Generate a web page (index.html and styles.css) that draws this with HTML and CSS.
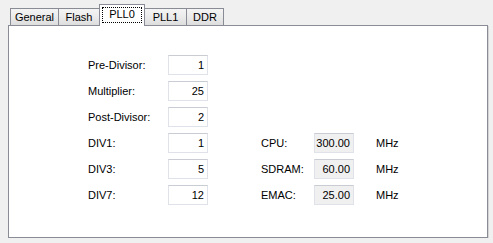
FILE: index.html
```html
<!DOCTYPE html>
<html lang="en">
<head>
    <meta charset="UTF-8">
    <title>PLL0</title>
    <link rel="stylesheet" href="styles.css">
</head>
<body>

<div class="tabs">
    <div class="tab tab-general">General</div>
    <div class="tab tab-flash">Flash</div>
    <div class="tab tab-pll0 active"><span class="focus">PLL0</span></div>
    <div class="tab tab-pll1">PLL1</div>
    <div class="tab tab-ddr">DDR</div>
</div>

<div class="panel">
    <div class="form">
        <div class="column">
            <div class="row"><label>Pre-Divisor:</label><div class="box">1</div></div>
            <div class="row"><label>Multiplier:</label><div class="box">25</div></div>
            <div class="row"><label>Post-Divisor:</label><div class="box">2</div></div>
            <div class="row"><label>DIV1:</label><div class="box">1</div></div>
            <div class="row"><label>DIV3:</label><div class="box">5</div></div>
            <div class="row"><label>DIV7:</label><div class="box">12</div></div>
        </div>
        <div class="column clocks">
            <div class="row"><label>CPU:</label><div class="box readonly">300.00</div><span class="unit">MHz</span></div>
            <div class="row"><label>SDRAM:</label><div class="box readonly">60.00</div><span class="unit">MHz</span></div>
            <div class="row"><label>EMAC:</label><div class="box readonly">25.00</div><span class="unit">MHz</span></div>
        </div>
    </div>
</div>

</body>
</html>
```

FILE: styles.css
```css
body {
    margin: 0;
    background: #f0f0f0;
    font-family: "Liberation Sans", Arial, sans-serif;
    font-size: 11px;
    color: #000;
}

/* tab strip */
.tabs {
    display: flex;
    align-items: flex-end;
    height: 25px;
    padding-left: 10px;
}

.tab {
    box-sizing: border-box;
    height: 17px;
    line-height: 17px;
    text-align: center;
    border: 1px solid #898c95;
    border-bottom: none;
    border-right: none;
    background: linear-gradient(#f4f4f4, #ebebeb 50%, #dddddd);
}

.tab-general { width: 48px; }
.tab-flash { width: 41px; }
.tab-pll1 { width: 41px; }
.tab-ddr { width: 38px; border-right: 1px solid #898c95; }

.tab-pll0 {
    width: 46px;
}

.tab.active {
    position: relative;
    z-index: 1;
    height: 22px;
    margin-bottom: -1px;
    background: #fff;
    border-right: 1px solid #898c95;
    padding: 2px 2px 0;
}

.tab-pll0 + .tab {
    border-left: none;
}

.focus {
    display: block;
    height: 16px;
    line-height: 13px;
    box-sizing: border-box;
    border: 1px dotted #000;
}

/* page */
.panel {
    box-sizing: border-box;
    width: 480px;
    height: 213px;
    margin-left: 8px;
    padding: 29px 0 0 79px;
    background: #fff;
    border: 1px solid #898c95;
    box-shadow: 1px 1px 0 #d5d5d5;
}

.form {
    display: flex;
    align-items: flex-end;
    gap: 53px;
}

.column {
    display: flex;
    flex-direction: column;
    gap: 6px;
}

.row {
    display: flex;
    align-items: center;
    height: 20px;
}

.row label {
    width: 80px;
}

.clocks .row label {
    width: 53px;
}

.box {
    box-sizing: border-box;
    width: 40px;
    height: 20px;
    line-height: 18px;
    padding-right: 3px;
    text-align: right;
    background: #fff;
    border: 1px solid #dfe2e8;
    border-top-color: #c9ccd2;
}

.box.readonly {
    background: #f0f0f0;
}

.unit {
    margin-left: 22px;
}
```
